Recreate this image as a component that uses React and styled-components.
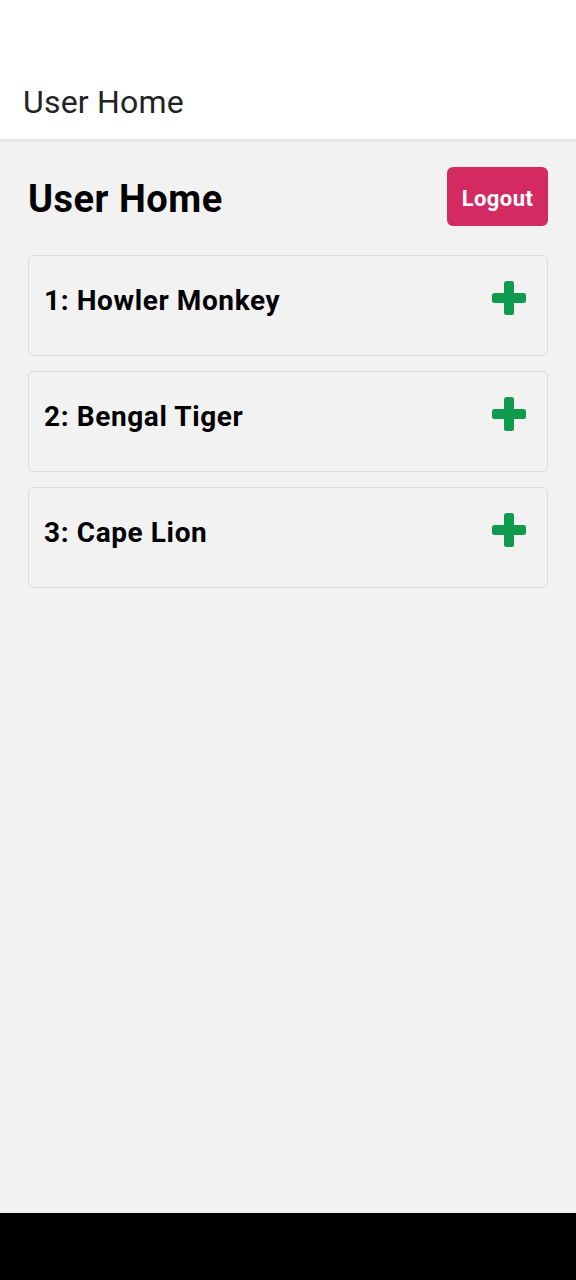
import React from 'react';
import styled, { createGlobalStyle } from 'styled-components';

const GlobalStyle = createGlobalStyle`
    html, body {
        margin: 0;
        padding: 0;
        background-color: #f2f2f2;
        font-family: Roboto, "Noto Sans", Arial, sans-serif;
    }
`;

const animals = [
    { id: 1, name: 'Howler Monkey' },
    { id: 2, name: 'Bengal Tiger' },
    { id: 3, name: 'Cape Lion' },
];

const PlusIcon = () => (
    <svg width="34" height="34" viewBox="0 0 34 34">
        <rect x="12" y="0" width="10" height="34" rx="2.5" fill="#109a4e" />
        <rect x="0" y="12" width="34" height="10" rx="2.5" fill="#109a4e" />
    </svg>
);

const App = () => {
    return (
        <Page>
            <GlobalStyle />
            <TopBar>
                <TopTitle>User Home</TopTitle>
            </TopBar>
            <Content>
                <HeadRow>
                    <Heading>User Home</Heading>
                    <LogoutBtn>Logout</LogoutBtn>
                </HeadRow>
                <List>
                    {animals.map((animal) => {
                        return (
                            <Card key={animal.id}>
                                <CardTitle>{animal.id}: {animal.name}</CardTitle>
                                <AddBtn>
                                    <PlusIcon />
                                </AddBtn>
                            </Card>
                        );
                    })}
                </List>
            </Content>
            <NavBar />
        </Page>
    );
}

const Page = styled.div`
    display: flex;
    flex-direction: column;
    min-height: 1280px;
`;

const TopBar = styled.header`
    height: 139px;
    background-color: #fff;
    display: flex;
    align-items: flex-end;
    padding: 0 23px 19px;
    box-sizing: border-box;
    box-shadow: 0 1px 4px rgba(0, 0, 0, 0.12);
    position: relative;
    z-index: 1;
`;

const TopTitle = styled.div`
    font-size: 32px;
    color: #222;
    line-height: 36px;
    letter-spacing: 0.2px;
`;

const Content = styled.main`
    flex: 1;
    padding: 28px 28px;
`;

const HeadRow = styled.div`
    display: flex;
    justify-content: space-between;
    align-items: center;
    margin-bottom: 29px;
`;

const Heading = styled.h1`
    margin: 4px 0 0;
    font-size: 38px;
    font-weight: 700;
    letter-spacing: 0.5px;
    color: #000;
`;

const LogoutBtn = styled.button`
    border-style: none;
    background-color: #d42a62;
    color: #fff;
    font-family: Roboto, Arial, sans-serif;
    font-weight: 700;
    font-size: 22px;
    letter-spacing: 0.4px;
    width: 101px;
    height: 59px;
    padding: 4px 0 0;
    border-radius: 6px;
    &:hover{
        cursor: pointer;
    }
`;

const List = styled.div`
    display: flex;
    flex-direction: column;
    gap: 15px;
`;

const Card = styled.div`
    display: flex;
    justify-content: space-between;
    align-items: flex-start;
    height: 101px;
    box-sizing: border-box;
    padding: 25px 21px 0 15px;
    border: 1px solid #dcdcdc;
    border-radius: 5px;
    background-color: #f2f2f2;
`;

const CardTitle = styled.h3`
    margin: 3px 0 0;
    font-size: 28px;
    line-height: 34px;
    font-weight: 700;
    letter-spacing: 0.6px;
    color: #000;
`;

const AddBtn = styled.div`
    display: flex;
    width: 34px;
    height: 34px;
    &:hover{
        cursor: pointer;
    }
`;

const NavBar = styled.div`
    height: 67px;
    background-color: #000;
`;

export default App;
